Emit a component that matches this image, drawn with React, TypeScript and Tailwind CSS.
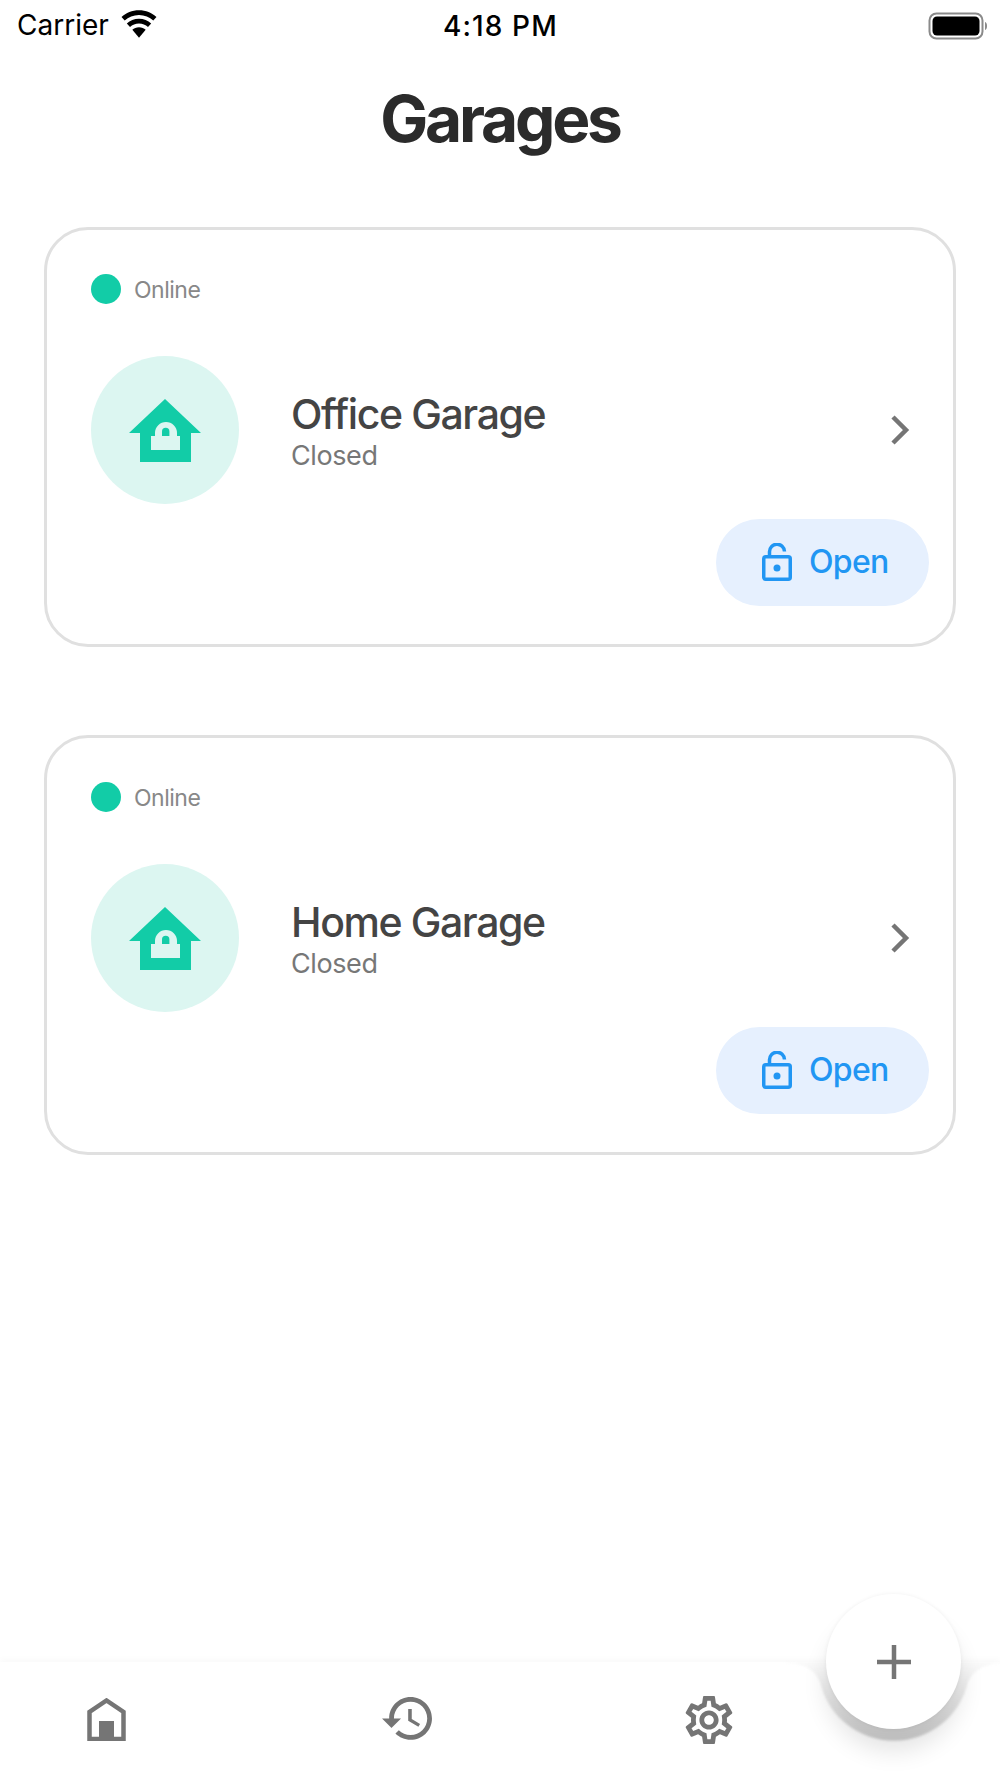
import React from "react";

const inter = "font-['Inter',sans-serif]";

function HouseLock() {
  return (
    <svg width="72" height="63" viewBox="0 0 72 63">
      <path fill="#12cca7" d="M36 0 L72 34 L62 34 L62 63 L11 63 L11 34 L0 34 Z" />
      <path fill="#dcf6f1" d="M22 51 L22 37 L26 37 L26 34 A11 11 0 0 1 48 34 L48 37 L51 37 L51 51 Z" />
      <path fill="#12cca7" d="M33 37 L33 32.500 A3.700 3.700 0 0 1 40.400 32.500 L40.400 37 Z" />
    </svg>
  );
}

function OpenLock() {
  return (
    <svg width="30" height="38" viewBox="0 0 30 38" fill="none" stroke="#2196f3" strokeWidth="3.500">
      <path d="M7.500 14 L7.500 9 A7.500 7.500 0 0 1 22.500 8.500" />
      <rect x="1.750" y="13.750" width="26.500" height="22.500" rx="2" />
      <circle cx="15" cy="25" r="3.500" fill="#2196f3" stroke="none" />
    </svg>
  );
}

function Card({ name }: { name: string }) {
  return (
    <div className="mx-[44px] h-[420px] rounded-[44px] border-[3px] border-[#e0e0e0] bg-white pl-[44px] pr-[24px] pt-[44px] flex flex-col">
      <div className="flex items-center h-[30px]">
        <div className="w-[30px] h-[30px] rounded-full bg-[#12cca7]" />
        <span className="ml-[13px] mt-[2px] text-[23px] leading-[30px] tracking-[-0.5px] text-[#888888]">Online</span>
      </div>
      <div className="flex items-center mt-[52px] h-[148px]">
        <div className="w-[148px] h-[148px] rounded-full bg-[#dcf6f1] flex items-center justify-center">
          <HouseLock />
        </div>
        <div className="ml-[52px] flex-1 flex flex-col pt-[3px]">
          <span className="text-[41px] leading-[46px] font-medium text-[#444444] tracking-[-1.4px]">{name}</span>
          <span className="text-[27px] leading-[33px] mt-[2px] text-[#777777] tracking-[-0.4px]">Closed</span>
        </div>
        <svg className="mr-[19px]" width="20" height="30" viewBox="0 0 20 30" fill="none" stroke="#757575" strokeWidth="4.500">
          <path d="M3 2 L16 15 L3 28" />
        </svg>
      </div>
      <div className="flex justify-end mt-[15px]">
        <div className="w-[213px] h-[87px] rounded-full bg-[#e6f0fe] flex items-center pl-[46px] pb-[1px]">
          <OpenLock />
          <span className="ml-[17px] text-[32px] font-medium text-[#2196f3] leading-none tracking-[-0.7px]">Open</span>
        </div>
      </div>
    </div>
  );
}

export default function App() {
  return (
    <div className={`relative w-[1000px] h-[1778px] bg-white overflow-hidden flex flex-col ${inter}`}>
      <div className="relative flex items-center justify-between h-[50px] pl-[17px] pr-[12px] text-black">
        <div className="flex items-center">
          <span className="text-[28px] leading-none font-normal">Carrier</span>
          <svg className="ml-[12px] mb-[3px]" width="36" height="28" viewBox="0 0 34 26">
            <path fill="#000" d="M17 0 C10.500 0 4.800 2.500 0.500 6.500 L3.500 9.800 C7 6.500 11.800 4.500 17 4.500 C22.200 4.500 27 6.500 30.500 9.800 L33.500 6.500 C29.200 2.500 23.500 0 17 0 Z" />
            <path fill="#000" d="M17 8 C12.500 8 8.500 9.800 5.500 12.500 L8.500 15.800 C10.700 13.800 13.700 12.500 17 12.500 C20.300 12.500 23.300 13.800 25.500 15.800 L28.500 12.500 C25.500 9.800 21.500 8 17 8 Z" />
            <path fill="#000" d="M17 16 C14.500 16 12.300 17 10.700 18.500 L17 26 L23.300 18.500 C21.700 17 19.500 16 17 16 Z" />
          </svg>
        </div>
        <span className="absolute left-[443px] top-[11px] text-[28px] leading-[30px] font-medium tracking-[1.100px]">4:18 PM</span>
        <svg width="60" height="28" viewBox="0 0 60 28" className="mt-[1px]">
          <rect x="1.500" y="1.500" width="53" height="25" rx="7" fill="none" stroke="#8a8a8a" strokeWidth="2" />
          <rect x="4.500" y="4.500" width="47" height="19" rx="4.500" fill="#000" />
          <path d="M57 10 C58.500 10.500 59 12 59 14 C59 16 58.500 17.500 57 18 Z" fill="#8a8a8a" />
        </svg>
      </div>

      <h1 className="mt-[33px] h-[72px] text-center text-[64px] leading-[72px] font-bold text-[#2b2b2b] tracking-[-3.200px]">Garages</h1>

      <div className="mt-[72px] flex flex-col gap-[88px]">
        <Card name="Office Garage" />
        <Card name="Home Garage" />
      </div>

      <div className="absolute left-0 right-0 bottom-0 h-[116px] bg-white shadow-[0_-3px_6px_rgba(0,0,0,0.025)]">
        <div className="flex items-start mt-[34px]">
          <svg className="ml-[87px] mt-[2px]" width="39" height="43" viewBox="0 0 39 43" fill="none">
            <path d="M2.500 41 L2.500 14 L19.500 2.500 L36.500 14 L36.500 41 Z" stroke="#757575" strokeWidth="4.500" />
            <rect x="12" y="23" width="15" height="18" fill="#757575" />
          </svg>
          <svg className="ml-[256px] mt-[1px]" width="50" height="44" viewBox="1 3 21 18.500" fill="#757575">
            <path d="M13 3c-4.970 0-9 4.030-9 9H1l3.890 3.890.07.140L9 12H6c0-3.870 3.130-7 7-7s7 3.130 7 7-3.130 7-7 7c-1.930 0-3.680-.79-4.940-2.060l-1.420 1.420C8.270 19.990 10.510 21 13 21c4.970 0 9-4.030 9-9s-4.030-9-9-9zm-1 5v5l4.280 2.540.72-1.210-3.500-2.080V8H12z" />
          </svg>
          <svg className="ml-[253px]" width="48" height="48" viewBox="2 2 20 20" fill="#757575">
            <path d="M19.430 12.980c.04-.32.07-.64.07-.98 0-.34-.03-.66-.07-.98l2.110-1.650c.19-.15.24-.42.12-.64l-2-3.460c-.09-.16-.26-.25-.44-.25-.06 0-.12.01-.17.03l-2.490 1c-.52-.4-1.080-.73-1.690-.98l-.38-2.650C14.460 2.180 14.250 2 14 2h-4c-.25 0-.46.18-.49.42l-.38 2.650c-.61.25-1.170.59-1.690.98l-2.490-1c-.06-.02-.12-.03-.18-.03-.17 0-.34.09-.43.25l-2 3.460c-.13.22-.07.49.12.64l2.110 1.650c-.04.32-.07.65-.07.98 0 .33.03.66.07.98l-2.110 1.650c-.19.15-.24.42-.12.64l2 3.460c.09.16.26.25.44.25.06 0 .12-.01.17-.03l2.490-1c.52.4 1.080.73 1.690.98l.38 2.650c.03.24.24.42.49.42h4c.25 0 .46-.18.49-.42l.38-2.650c.61-.25 1.170-.59 1.690-.98l2.490 1c.06.02.12.03.18.03.17 0 .34-.09.43-.25l2-3.460c.12-.22.07-.49-.12-.64l-2.110-1.650zm-1.980-1.710c.04.31.05.52.05.73 0 .21-.02.43-.05.73l-.14 1.130.89.7 1.080.84-.7 1.210-1.270-.51-1.040-.42-.9.68c-.43.32-.84.56-1.250.73l-1.060.43-.16 1.130-.2 1.350h-1.400l-.19-1.350-.16-1.130-1.060-.43c-.43-.18-.83-.41-1.230-.71l-.91-.7-1.060.43-1.270.51-.7-1.210 1.080-.84.89-.7-.14-1.130c-.03-.31-.05-.54-.05-.74s.02-.43.05-.73l.14-1.130-.89-.7-1.080-.84.7-1.210 1.270.51 1.040.42.9-.68c.43-.32.84-.56 1.250-.73l1.060-.43.16-1.130.2-1.350h1.390l.19 1.350.16 1.130 1.060.43c.43.18.83.41 1.230.71l.91.7 1.060-.43 1.270-.51.7 1.210-1.070.85-.89.7.14 1.130zM12 8c-2.210 0-4 1.790-4 4s1.790 4 4 4 4-1.790 4-4-1.790-4-4-4zm0 6c-1.100 0-2-.9-2-2s.9-2 2-2 2 .9 2 2-.9 2-2 2z" />
          </svg>
        </div>
      </div>

      <svg className="absolute left-[760px] top-[1640px] blur-[1px]" width="240" height="138" viewBox="0 0 240 138">
        <defs>
          <linearGradient id="notch" gradientUnits="userSpaceOnUse" x1="0" y1="22" x2="0" y2="98">
            <stop offset="0" stopColor="#fafafa" />
            <stop offset="0.5" stopColor="#e6e6e6" />
            <stop offset="1" stopColor="#d2d2d2" />
          </linearGradient>
        </defs>
        <path fill="url(#notch)" d="M15 22 C42 22 54 28 60 42 A76 76 0 0 0 208 42 C214 30 224 24 240 23 L240 22 Z" />
      </svg>

      <div className="absolute left-[826px] top-[1594px] w-[135px] h-[135px] rounded-full bg-white shadow-[0_22px_24px_rgba(0,0,0,0.11),0_0_4px_rgba(0,0,0,0.06)] flex items-center justify-center">
        <svg width="36" height="36" viewBox="0 0 36 36" stroke="#757575" strokeWidth="4.500">
          <path d="M18 1 L18 35 M1 18 L35 18" />
        </svg>
      </div>
    </div>
  );
}
